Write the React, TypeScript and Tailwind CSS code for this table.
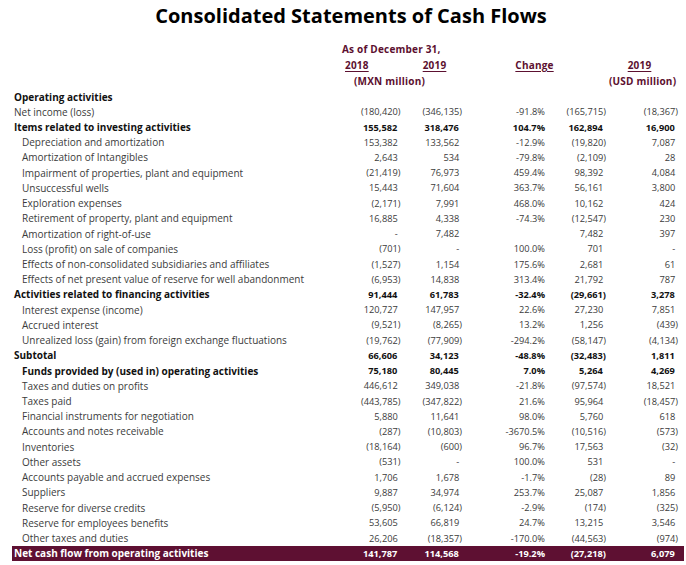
type Row = {
  label: string;
  level: 0 | 1;
  bold?: boolean;
  total?: boolean;
  values?: [string, string, string, string, string];
};

const rows: Row[] = [
  { label: "Operating activities", level: 0, bold: true },
  { label: "Net income (loss)", level: 0, values: ["(180,420)", "(346,135)", "-91.8%", "(165,715)", "(18,367)"] },
  { label: "Items related to investing activities", level: 0, bold: true, values: ["155,582", "318,476", "104.7%", "162,894", "16,900"] },
  { label: "Depreciation and amortization", level: 1, values: ["153,382", "133,562", "-12.9%", "(19,820)", "7,087"] },
  { label: "Amortization of Intangibles", level: 1, values: ["2,643", "534", "-79.8%", "(2,109)", "28"] },
  { label: "Impairment of properties, plant and equipment", level: 1, values: ["(21,419)", "76,973", "459.4%", "98,392", "4,084"] },
  { label: "Unsuccessful wells", level: 1, values: ["15,443", "71,604", "363.7%", "56,161", "3,800"] },
  { label: "Exploration expenses", level: 1, values: ["(2,171)", "7,991", "468.0%", "10,162", "424"] },
  { label: "Retirement of property, plant and equipment", level: 1, values: ["16,885", "4,338", "-74.3%", "(12,547)", "230"] },
  { label: "Amortization of right-of-use", level: 1, values: ["-", "7,482", "", "7,482", "397"] },
  { label: "Loss (profit) on sale of companies", level: 1, values: ["(701)", "-", "100.0%", "701", "-"] },
  { label: "Effects of non-consolidated subsidiaries and affiliates", level: 1, values: ["(1,527)", "1,154", "175.6%", "2,681", "61"] },
  { label: "Effects of net present value of reserve for well abandonment", level: 1, values: ["(6,953)", "14,838", "313.4%", "21,792", "787"] },
  { label: "Activities related to financing activities", level: 0, bold: true, values: ["91,444", "61,783", "-32.4%", "(29,661)", "3,278"] },
  { label: "Interest expense (income)", level: 1, values: ["120,727", "147,957", "22.6%", "27,230", "7,851"] },
  { label: "Accrued interest", level: 1, values: ["(9,521)", "(8,265)", "13.2%", "1,256", "(439)"] },
  { label: "Unrealized loss (gain) from foreign exchange fluctuations", level: 1, values: ["(19,762)", "(77,909)", "-294.2%", "(58,147)", "(4,134)"] },
  { label: "Subtotal", level: 0, bold: true, values: ["66,606", "34,123", "-48.8%", "(32,483)", "1,811"] },
  { label: "Funds provided by (used in) operating activities", level: 1, bold: true, values: ["75,180", "80,445", "7.0%", "5,264", "4,269"] },
  { label: "Taxes and duties on profits", level: 1, values: ["446,612", "349,038", "-21.8%", "(97,574)", "18,521"] },
  { label: "Taxes paid", level: 1, values: ["(443,785)", "(347,822)", "21.6%", "95,964", "(18,457)"] },
  { label: "Financial instruments for negotiation", level: 1, values: ["5,880", "11,641", "98.0%", "5,760", "618"] },
  { label: "Accounts and notes receivable", level: 1, values: ["(287)", "(10,803)", "-3670.5%", "(10,516)", "(573)"] },
  { label: "Inventories", level: 1, values: ["(18,164)", "(600)", "96.7%", "17,563", "(32)"] },
  { label: "Other assets", level: 1, values: ["(531)", "-", "100.0%", "531", "-"] },
  { label: "Accounts payable and accrued expenses", level: 1, values: ["1,706", "1,678", "-1.7%", "(28)", "89"] },
  { label: "Suppliers", level: 1, values: ["9,887", "34,974", "253.7%", "25,087", "1,856"] },
  { label: "Reserve for diverse credits", level: 1, values: ["(5,950)", "(6,124)", "-2.9%", "(174)", "(325)"] },
  { label: "Reserve for employees benefits", level: 1, values: ["53,605", "66,819", "24.7%", "13,215", "3,546"] },
  { label: "Other taxes and duties", level: 1, values: ["26,206", "(18,357)", "-170.0%", "(44,563)", "(974)"] },
  { label: "Net cash flow from operating activities", level: 0, bold: true, total: true, values: ["141,787", "114,568", "-19.2%", "(27,218)", "6,079"] },
];

const colWidths = ["w-[60px]", "w-[61.5px]", "w-[83px]", "w-[61px]", "w-[72px]"];

// accounting style: closing paren hangs past the digits
const Amount = ({ value, hang }: { value: string; hang: boolean }) => {
  if (!hang || value.endsWith(")")) return <>{value}</>;
  return (
    <>
      {value}
      <span className="invisible">)</span>
    </>
  );
};

const App = () => {
  return (
    <div
      className="w-[686px] h-[565px] overflow-hidden bg-white text-[#3b3b3b]"
      style={{ fontFamily: '"Open Sans", "Liberation Sans", sans-serif' }}
    >
      <h1 className="pt-[4px] pl-[16px] h-[28px] text-center text-[20px] leading-[24px] font-bold text-black">
        Consolidated Statements of Cash Flows
      </h1>

      <div className="mt-[13px] text-[10px] font-bold tracking-[0.2px] text-[#5c1030]">
        <div className="flex h-[16px] items-center pl-[342px]">As of December 31,</div>
        <div className="flex h-[16px] items-center">
          <span className="ml-[345px] underline underline-offset-2">2018</span>
          <span className="ml-[54px] underline underline-offset-2">2019</span>
          <span className="ml-[69px] underline underline-offset-2">Change</span>
          <span className="ml-[74px] underline underline-offset-2">2019</span>
        </div>
        <div className="flex h-[16px] items-center">
          <span className="ml-[354px]">(MXN million)</span>
          <span className="ml-[184px]">(USD million)</span>
        </div>
      </div>

      <div className="ml-[12px] mr-[2px] mt-[0.5px]">
        {rows.map((row) => (
          <div
            key={row.label}
            className={`flex h-[15.23px] items-center pr-[6px] ${
              row.total ? "bg-[#5e1032] text-white" : row.bold ? "text-[#111]" : ""
            } ${row.bold ? "font-bold" : ""}`}
          >
            <div
              className={`flex-1 whitespace-nowrap text-[10px] ${row.level === 1 ? "pl-[10px]" : "pl-[2px]"}`}
            >
              {row.label}
            </div>
            {row.values?.map((v, i) => (
              <div key={i} className={`${colWidths[i]} text-right whitespace-nowrap text-[9.25px]`}>
                <Amount value={v} hang={i !== 2} />
              </div>
            ))}
          </div>
        ))}
      </div>
    </div>
  );
};

export default App;
